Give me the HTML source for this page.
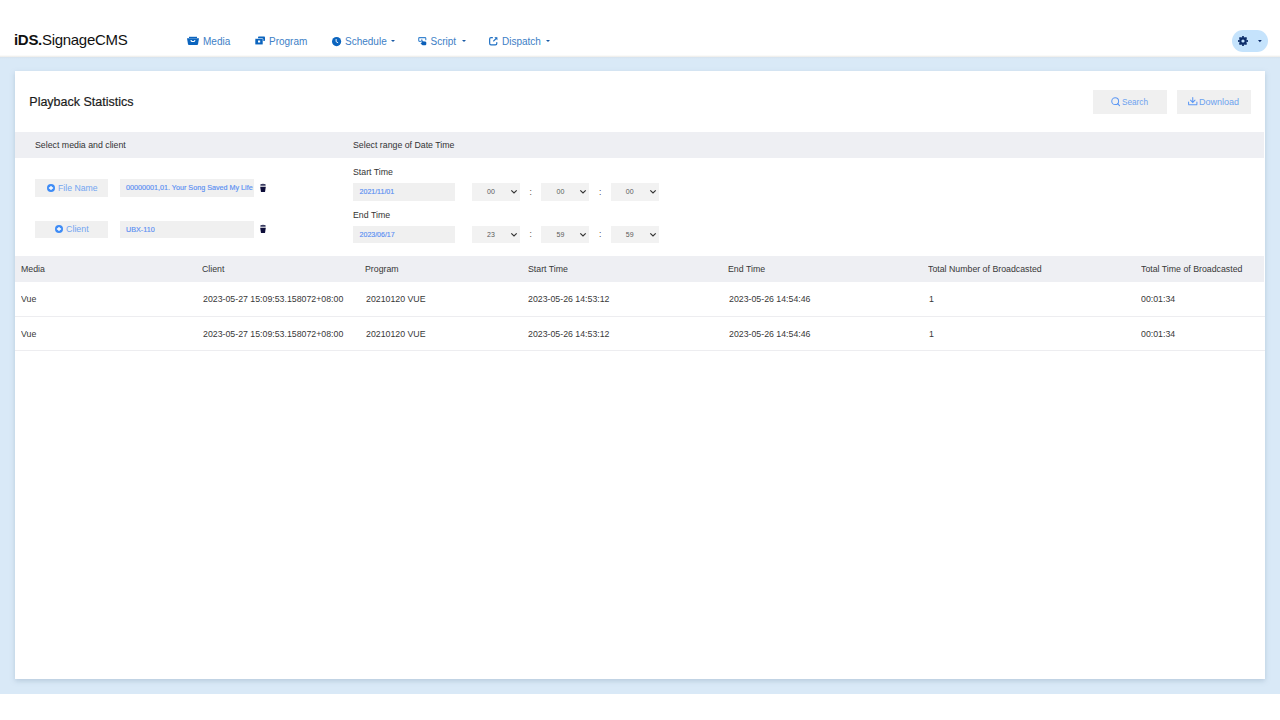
<!DOCTYPE html>
<html><head><meta charset="utf-8">
<style>
*{margin:0;padding:0;box-sizing:border-box;}
html,body{width:1280px;height:720px;overflow:hidden;background:#fff;font-family:"Liberation Sans",sans-serif;}
.a{position:absolute;white-space:nowrap;line-height:1;}
#band{position:absolute;left:0;top:57px;width:1280px;height:637px;background:#d9e9f7;}
#band:before{content:"";position:absolute;left:0;top:-2px;width:100%;height:2px;background:linear-gradient(rgba(240,238,234,0),#ecebe8);}
#band:after{content:"";position:absolute;left:0;top:0;width:100%;height:1.5px;background:linear-gradient(#d6e2ee,#d9e9f7);}
#card{position:absolute;left:14.8px;top:71px;width:1250.5px;height:608px;background:#fff;box-shadow:0 2px 5px rgba(120,145,170,.34);}
.logo{left:14px;top:32px;font-size:15px;color:#111;letter-spacing:-0.3px;}
.logo b{font-weight:bold;}
.nav{top:37px;font-size:10px;color:#4080c6;}
.caret{position:absolute;width:0;height:0;border-left:2.5px solid transparent;border-right:2.5px solid transparent;border-top:2.5px solid #1a5aa6;}
.btn{background:#efefef;}
.btxt{font-size:9.5px;color:#6da2ef;top:97.3px;transform-origin:0 0;}
.title{left:29.3px;top:96px;font-size:12.5px;color:#1b1b1b;-webkit-text-stroke:0.2px #1b1b1b;}
.gray{position:absolute;background:#eeeff3;}
.lbl{font-size:9.75px;color:#333;transform:scaleX(.9);transform-origin:0 0;}
.box{position:absolute;background:#f0f0f0;}
.itxt{font-size:7.2px;color:#5a8ff2;-webkit-text-stroke:0.15px #5a8ff2;}
.dtxt{font-size:7px;color:#5a8ff2;-webkit-text-stroke:0.15px #5a8ff2;}
.stxt{font-size:7px;color:#5a5a5a;}
.btn2{font-size:9.75px;color:#72a5f0;transform-origin:0 0;}
.t{font-size:9.75px;color:#383838;transform:scaleX(.9);transform-origin:0 0;}
.sep{position:absolute;left:15px;width:1250px;height:1px;background:#ededf0;}
svg{position:absolute;overflow:visible;}
</style></head><body>
<div class="a logo"><b>iDS.</b>SignageCMS</div>

<!-- nav icons -->
<svg style="left:187px;top:36px" width="12" height="9" viewBox="0 0 12 9">
  <path d="M2 0.8 H10 V2 H2Z" fill="#0b64be"/>
  <path d="M0 2.2 H12 L11 8.2 Q10.9 9 10 9 H2 Q1.1 9 1 8.2 Z" fill="#0b64be"/>
  <path d="M3.5 4 H4.6 Q4.7 4.9 5.3 4.9 H6.7 Q7.3 4.9 7.4 4 H8.3 V4.6 Q8.3 6 7 6 H4.8 Q3.5 6 3.5 4.6Z" fill="#fff"/>
</svg>
<svg style="left:255px;top:36px" width="10" height="9" viewBox="0 0 10 9">
  <rect x="3" y="0.5" width="7" height="4.5" rx="0.8" fill="#0b64be"/>
  <rect x="0" y="2.5" width="8" height="6.3" rx="0.8" fill="#0b64be" stroke="#fff" stroke-width="0.6"/>
  <rect x="3" y="4.5" width="2.2" height="2" fill="#fff"/>
</svg>
<svg style="left:331.7px;top:36.6px" width="9.2" height="9.2" viewBox="0 0 10 10">
  <circle cx="5" cy="5" r="5" fill="#0b64be"/>
  <path d="M4.5 2.6 V5.1 L6.3 6.1" stroke="#fff" stroke-width="1" fill="none" stroke-linecap="round"/>
</svg>
<svg style="left:418px;top:36.8px" width="9" height="9" viewBox="0 0 9 9">
  <path d="M2.4 4.4 H1.6 Q0.7 4.4 0.7 3.5 V1.4 Q0.7 0.6 1.5 0.6 H7 Q7.8 0.6 7.8 1.4 V2.8" stroke="#3a85d0" stroke-width="1.1" fill="none" stroke-linecap="round"/>
  <path d="M3.2 2.6 L3.6 6 L2.4 6.4 L4.6 8.3 H7.2 Q8.3 8.2 8.3 7 V5.6 Q8.1 4.8 7 4.6 L4.6 4.2 L4.3 2.4Z" fill="#0b5fb8"/>
</svg>
<svg style="left:489px;top:36.6px" width="9" height="8.6" viewBox="0 0 9 8.6">
  <path d="M3.4 0.65 H2 Q0.65 0.65 0.65 2 V6.2 Q0.65 7.8 2 7.8 H6.4 Q7.8 7.8 7.8 6.4 V5.6" stroke="#1f70c4" stroke-width="1.2" fill="none" stroke-linecap="round"/>
  <path d="M5.4 0.3 H8.4 V3.3 Z" fill="#0b5fb8"/>
  <path d="M7.2 1.5 L4.6 4" stroke="#2a78c8" stroke-width="1.1" stroke-linecap="round"/>
</svg>
<div class="a nav" style="left:203px;">Media</div>
<div class="a nav" style="left:269px;">Program</div>
<div class="a nav" style="left:345px;">Schedule</div>
<div class="a nav" style="left:430.5px;">Script</div>
<div class="a nav" style="left:502px;">Dispatch</div>
<div class="caret" style="left:391px;top:40px;"></div>
<div class="caret" style="left:462px;top:40px;"></div>
<div class="caret" style="left:546px;top:40px;"></div>

<div class="a" style="left:1232px;top:30px;width:36px;height:22px;border-radius:11px;background:#c5e3fc;"></div>
<svg style="left:1238.3px;top:35.9px" width="10" height="10" viewBox="-5 -5 10 10">
  <path d="M-1.35 -3.30 L-0.65 -5.00 L0.65 -5.00 L1.35 -3.30Z M1.38 -3.29 L3.08 -4.00 L4.00 -3.08 L3.29 -1.38Z M3.30 -1.35 L5.00 -0.65 L5.00 0.65 L3.30 1.35Z M3.29 1.38 L4.00 3.08 L3.08 4.00 L1.38 3.29Z M1.35 3.30 L0.65 5.00 L-0.65 5.00 L-1.35 3.30Z M-1.38 3.29 L-3.08 4.00 L-4.00 3.08 L-3.29 1.38Z M-3.30 1.35 L-5.00 0.65 L-5.00 -0.65 L-3.30 -1.35Z M-3.29 -1.38 L-4.00 -3.08 L-3.08 -4.00 L-1.38 -3.29Z" fill="#0c2c68"/>
  <circle r="3.65" fill="#0c2c68"/>
  <circle r="1.6" fill="#c5e3fc"/>
</svg>
<svg style="left:1257.8px;top:39.9px" width="4" height="2.4" viewBox="0 0 4 2.4"><path d="M0 0 H3.8 L1.9 2.3Z" fill="#0c2c68"/></svg>

<div id="band"></div>
<div id="card"></div>

<div class="a title">Playback Statistics</div>
<div class="box" style="left:1093.2px;top:90.2px;width:73.5px;height:23.8px;"></div>
<div class="box" style="left:1177.4px;top:90.2px;width:73.3px;height:23.8px;"></div>
<svg style="left:1110.5px;top:96.5px" width="9.5" height="9.5" viewBox="0 0 10 10">
  <circle cx="4.4" cy="4.4" r="3.6" stroke="#5d98f4" stroke-width="1.1" fill="none"/>
  <path d="M7 7 L9 9" stroke="#5d98f4" stroke-width="1.2" stroke-linecap="round"/>
</svg>
<div class="a btxt" style="left:1122px;transform:scaleX(.865)">Search</div>
<svg style="left:1187.5px;top:97px" width="9.5" height="8.5" viewBox="0 0 10 9">
  <path d="M5 0.5 V5.5 M2.6 3.4 L5 5.8 L7.4 3.4" stroke="#5d98f4" stroke-width="1.1" fill="none" stroke-linecap="round"/>
  <path d="M0.6 5.4 V7.6 Q0.6 8.3 1.3 8.3 H8.7 Q9.4 8.3 9.4 7.6 V5.4" stroke="#5d98f4" stroke-width="1.1" fill="none" stroke-linecap="round"/>
</svg>
<div class="a btxt" style="left:1198.8px;transform:scaleX(.95)">Download</div>

<div class="gray" style="left:15.2px;top:132px;width:1249px;height:25.8px;"></div>
<div class="a lbl" style="left:35px;top:140.45px;">Select media and client</div>
<div class="a lbl" style="left:352.9px;top:140.45px;">Select range of Date Time</div>

<!-- left column -->
<div class="box" style="left:35.2px;top:179px;width:73.3px;height:17.5px;"></div>
<svg style="left:46.6px;top:183.7px" width="8" height="8" viewBox="0 0 8 8">
  <circle cx="4" cy="4" r="4" fill="#3f8cf6"/>
  <path d="M4 1.9 V6.1 M1.9 4 H6.1" stroke="#fff" stroke-width="1.3"/>
</svg>
<div class="a btn2" style="left:57.7px;top:183.2px;transform:scaleX(.89)">File Name</div>
<div class="box" style="left:119.5px;top:179px;width:134.5px;height:17.5px;"></div>
<div class="a itxt" style="left:126px;top:184.4px;">00000001,01. Your Song Saved My Life</div>
<svg style="left:260px;top:184px" width="6" height="8" viewBox="0 0 6 8">
  <path d="M0.4 0.7 Q0.4 0.1 1 0.1 H5 Q5.6 0.1 5.6 0.7 V1.8 H0.4Z" fill="#3a3d62"/><path d="M2 0.1 Q3 -0.5 4 0.1Z" fill="#14143e"/>
  <path d="M0.2 2.8 H5.8 L5.1 7.4 Q5 8 4.4 8 H1.6 Q1 8 0.9 7.4Z" fill="#0e0e3a"/>
</svg>

<div class="box" style="left:35.2px;top:220.5px;width:73.3px;height:17.3px;"></div>
<svg style="left:55.2px;top:225.1px" width="8" height="8" viewBox="0 0 8 8">
  <circle cx="4" cy="4" r="4" fill="#3f8cf6"/>
  <path d="M4 1.9 V6.1 M1.9 4 H6.1" stroke="#fff" stroke-width="1.3"/>
</svg>
<div class="a btn2" style="left:65.9px;top:224.1px;transform:scaleX(.91)">Client</div>
<div class="box" style="left:119.5px;top:220.5px;width:134.5px;height:17.3px;"></div>
<div class="a itxt" style="left:126px;top:225.5px;">UBX-110</div>
<svg style="left:260px;top:225px" width="6" height="8" viewBox="0 0 6 8">
  <path d="M0.4 0.7 Q0.4 0.1 1 0.1 H5 Q5.6 0.1 5.6 0.7 V1.8 H0.4Z" fill="#3a3d62"/><path d="M2 0.1 Q3 -0.5 4 0.1Z" fill="#14143e"/>
  <path d="M0.2 2.8 H5.8 L5.1 7.4 Q5 8 4.4 8 H1.6 Q1 8 0.9 7.4Z" fill="#0e0e3a"/>
</svg>

<!-- date column -->
<div class="a lbl" style="left:352.9px;top:166.85px;">Start Time</div>
<div class="box" style="left:353.2px;top:183.2px;width:101.7px;height:17.4px;"></div>
<div class="a dtxt" style="left:359.6px;top:188.1px;">2021/11/01</div>
<div class="box" style="left:472px;top:183.2px;width:48px;height:17.6px;background:#f2f2f2"></div>
<div class="box" style="left:541.4px;top:183.2px;width:47.7px;height:17.6px;background:#f2f2f2"></div>
<div class="box" style="left:611px;top:183.2px;width:47.7px;height:17.6px;background:#f2f2f2"></div>
<div class="a stxt" style="left:487px;top:188.1px;">00</div>
<div class="a stxt" style="left:556.6px;top:188.1px;">00</div>
<div class="a stxt" style="left:625.8px;top:188.1px;">00</div>

<div class="a lbl" style="left:352.9px;top:209.85px;">End Time</div>
<div class="box" style="left:353.2px;top:225.8px;width:101.7px;height:17.4px;"></div>
<div class="a dtxt" style="left:359.6px;top:230.7px;">2023/06/17</div>
<div class="box" style="left:472px;top:225.8px;width:48px;height:17.6px;background:#f2f2f2"></div>
<div class="box" style="left:541.4px;top:225.8px;width:47.7px;height:17.6px;background:#f2f2f2"></div>
<div class="box" style="left:611px;top:225.8px;width:47.7px;height:17.6px;background:#f2f2f2"></div>
<div class="a stxt" style="left:487px;top:230.7px;">23</div>
<div class="a stxt" style="left:556.6px;top:230.7px;">59</div>
<div class="a stxt" style="left:625.8px;top:230.7px;">59</div>

<svg style="left:0;top:0" width="1" height="1">
  <defs><path id="chev" d="M0.3 0.3 L3 3 L5.7 0.3" stroke="#333" stroke-width="1.15" fill="none"/></defs>
</svg>
<svg style="left:511px;top:190.3px" width="6" height="3"><use href="#chev"/></svg>
<svg style="left:580.3px;top:190.3px" width="6" height="3"><use href="#chev"/></svg>
<svg style="left:649.6px;top:190.3px" width="6" height="3"><use href="#chev"/></svg>
<svg style="left:511px;top:232.9px" width="6" height="3"><use href="#chev"/></svg>
<svg style="left:580.3px;top:232.9px" width="6" height="3"><use href="#chev"/></svg>
<svg style="left:649.6px;top:232.9px" width="6" height="3"><use href="#chev"/></svg>

<div class="a stxt" style="left:529.5px;top:187.5px;color:#4a4a4a;font-size:8.5px">:</div>
<div class="a stxt" style="left:599px;top:187.5px;color:#4a4a4a;font-size:8.5px">:</div>
<div class="a stxt" style="left:529.5px;top:230.1px;color:#4a4a4a;font-size:8.5px">:</div>
<div class="a stxt" style="left:599px;top:230.1px;color:#4a4a4a;font-size:8.5px">:</div>

<!-- table -->
<div class="gray" style="left:15.2px;top:256px;width:1249px;height:25.9px;"></div>
<div class="a t" style="left:20.8px;top:263.65px;">Media</div>
<div class="a t" style="left:202.1px;top:263.65px;">Client</div>
<div class="a t" style="left:364.7px;top:263.65px;">Program</div>
<div class="a t" style="left:527.7px;top:263.65px;">Start Time</div>
<div class="a t" style="left:727.9px;top:263.65px;">End Time</div>
<div class="a t" style="left:928px;top:263.65px;">Total Number of Broadcasted</div>
<div class="a t" style="left:1140.5px;top:263.65px;">Total Time of Broadcasted</div>

<div class="a t" style="left:20.8px;top:293.65px;">Vue</div>
<div class="a t" style="left:202.5px;top:293.65px;">2023-05-27 15:09:53.158072+08:00</div>
<div class="a t" style="left:365.6px;top:293.65px;">20210120 VUE</div>
<div class="a t" style="left:528.2px;top:293.65px;">2023-05-26 14:53:12</div>
<div class="a t" style="left:728.6px;top:293.65px;">2023-05-26 14:54:46</div>
<div class="a t" style="left:928.5px;top:293.65px;">1</div>
<div class="a t" style="left:1141px;top:293.65px;">00:01:34</div>
<div class="sep" style="top:316px;"></div>

<div class="a t" style="left:20.8px;top:328.65px;">Vue</div>
<div class="a t" style="left:202.5px;top:328.65px;">2023-05-27 15:09:53.158072+08:00</div>
<div class="a t" style="left:365.6px;top:328.65px;">20210120 VUE</div>
<div class="a t" style="left:528.2px;top:328.65px;">2023-05-26 14:53:12</div>
<div class="a t" style="left:728.6px;top:328.65px;">2023-05-26 14:54:46</div>
<div class="a t" style="left:928.5px;top:328.65px;">1</div>
<div class="a t" style="left:1141px;top:328.65px;">00:01:34</div>
<div class="sep" style="top:350px;"></div>
</body></html>
